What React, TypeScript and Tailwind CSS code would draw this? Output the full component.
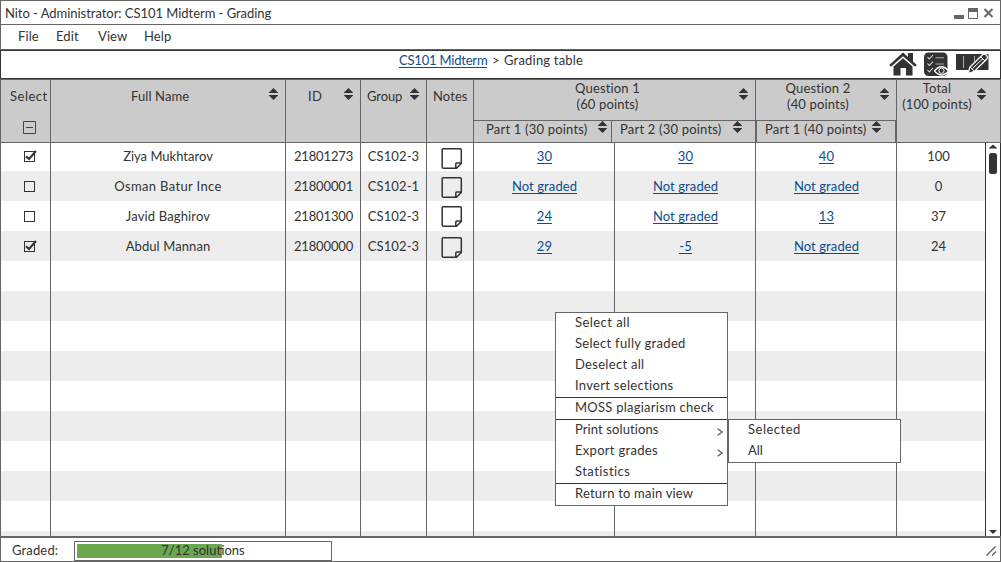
import React from "react";

const COLS = "grid grid-cols-[50px_235px_75px_66px_47px_141px_141px_141px_88px]";

function Sort({ className = "" }: { className?: string }) {
  return (
    <svg width="9" height="12" viewBox="0 0 9 12" className={"shrink-0 " + className}>
      <path d="M4.5 0 L9 4.4 V5 H0 V4.4 Z M0 7 H9 V7.6 L4.5 12 L0 7.6 Z" fill="#333" />
    </svg>
  );
}

function Check({ on }: { on: boolean }) {
  return (
    <svg width="14" height="12" viewBox="0 0 14 12" className="block">
      <rect x="0.5" y="1.5" width="10" height="10" fill="none" stroke="#333" />
      {on && <path d="M2 6.2 L5 9 L12 1" fill="none" stroke="#333" strokeWidth="2" />}
    </svg>
  );
}

function Note() {
  return (
    <svg width="22" height="22" viewBox="0 0 22 22" className="block">
      <path d="M2 0.8 H19 Q20.3 0.8 20.3 2 V15.5 L15.5 20.3 H2.5 Q1.2 20.3 1.2 19 V1.6 Q1.2 0.8 2 0.8 Z M14.8 20 V16 Q14.8 15 15.8 15 H20" fill="none" stroke="#333" strokeWidth="1.5" />
    </svg>
  );
}

function HomeIcon() {
  return (
    <svg width="28" height="24" viewBox="0 0 28 24">
      <path d="M0.3 13 L14 0.5 L19 5 V1 H24 V9.6 L27.8 13 L26 14.7 L14 4.3 L2 14.7 Z" fill="#333" />
      <path d="M4.5 14.5 L14 6.2 L23.5 14.5 V23.5 H17 V16 H11.5 V23.5 H4.5 Z" fill="#333" />
    </svg>
  );
}

function ReviewIcon() {
  return (
    <svg width="25" height="25" viewBox="0 0 25 25">
      <rect x="0" y="0.5" width="23.5" height="23.5" rx="4.5" fill="#333" />
      <g fill="none" stroke="#ddd" strokeWidth="1.1">
        <path d="M3.5 5 L5.3 7 L9 3 M3.5 11.5 L5.3 13.5 L9 9.5 M3.5 18 L5.3 20 L9 16" />
        <path d="M11.5 5.7 H20 M11.5 12 H20" stroke="#aaa" />
      </g>
      <path d="M10.5 19 Q17.5 10.5 24.5 19 Q17.5 27 10.5 19 Z" fill="#333" stroke="#fff" strokeWidth="1.3" />
      <circle cx="17.5" cy="18.8" r="2.6" fill="#333" stroke="#fff" />
    </svg>
  );
}

function EditIcon() {
  return (
    <svg width="34" height="21" viewBox="0 0 34 21">
      <path d="M0 1 H32.5 V17 H0 Z" fill="#333" />
      <path d="M7.5 3 V15 M18.5 3 V10" stroke="#aaa" />
      <path d="M12 20.7 L14 14 L26.5 1.8 Q28.5 0.4 30.5 2.2 Q32 4 30.8 6 L18.5 18.3 Z" fill="#333" stroke="#fff" strokeWidth="1.3" />
      <path d="M14 14 L18.5 18.3 M24.5 3.8 L29 8 M16.5 15.5 L27 5.5" stroke="#fff" fill="none" />
    </svg>
  );
}

function Link({ children }: { children: React.ReactNode }) {
  return <span className="block h-[15px] border-b border-[#0d4b8f] leading-[14px] tracking-[0.1px] text-[#0d4b8f]">{children}</span>;
}

type Student = { name: string; id: string; group: string; grades: string[]; total: string; on: boolean };

const students: Student[] = [
  { name: "Ziya Mukhtarov", id: "21801273", group: "CS102-3", grades: ["30", "30", "40"], total: "100", on: true },
  { name: "Osman Batur Ince", id: "21800001", group: "CS102-1", grades: ["Not graded", "Not graded", "Not graded"], total: "0", on: false },
  { name: "Javid Baghirov", id: "21801300", group: "CS102-3", grades: ["24", "Not graded", "13"], total: "37", on: false },
  { name: "Abdul Mannan", id: "21800000", group: "CS102-3", grades: ["29", "-5", "Not graded"], total: "24", on: true },
];

const nameTracking = ["tracking-[0px]", "tracking-[0.35px]", "tracking-[0.15px]", "tracking-[0.1px]"];
const noteOffset = ["-mt-[1px]", "-mt-[2px]", "-mt-[3px]", "-mt-[2px]"];

const cell = "flex items-start justify-center border-r border-[#666] whitespace-nowrap";

function Row({ index }: { index: number }) {
  const s = students[index];
  const pad = index === 0 ? " h-7 pt-[6px]" : " h-[30px] pt-2";
  const c = cell + pad;
  return (
    <div className={COLS + " shrink-0 " + (index % 2 ? "bg-[#ededed]" : "bg-white")}>
      <div className={c + " justify-start! pl-[23px]"}>{s && <div className="pt-[1px]"><Check on={s.on} /></div>}</div>
      <div className={c}>{s && <span className={"leading-[14px] " + nameTracking[index]}>{s.name}</span>}</div>
      <div className={c + " pl-[1px]"}>{s && <span className="leading-[14px] tracking-[-0.15px]">{s.id}</span>}</div>
      <div className={c}>{s && <span className="leading-[14px] tracking-[0.1px]">{s.group}</span>}</div>
      <div className={c + " pl-[3px]"}>{s && <div className={noteOffset[index]}><Note /></div>}</div>
      {[0, 1, 2].map((i) => (
        <div key={i} className={c + " pl-[1px]"}>{s && <Link>{s.grades[i]}</Link>}</div>
      ))}
      <div className={"flex items-start justify-center pr-[5px]" + pad}>{s && <span className="leading-[14px] tracking-[0px]">{s.total}</span>}</div>
    </div>
  );
}

function Item({ text, sub = false, tracking = "" }: { text: string; sub?: boolean; tracking?: string }) {
  return (
    <div className="flex h-[21px] justify-between pr-1 pl-[19px] whitespace-nowrap">
      <span className={"pt-[2px] leading-[14px] " + tracking}>{text}</span>
      {sub && (
        <svg width="6" height="8" viewBox="0 0 6 8" className="mt-2">
          <path d="M0.7 0.8 L5 4 L0.7 7.2" fill="none" stroke="#666" strokeWidth="1.4" />
        </svg>
      )}
    </div>
  );
}

export default function App() {
  return (
    <div className="relative flex h-[562px] w-[1001px] flex-col overflow-hidden bg-white font-['Lato','Liberation_Sans',sans-serif] text-[13px] tracking-[0.3px] text-[#333]">
      <div className="flex h-[25px] shrink-0 items-center justify-between border border-[#666] pr-[6px] pl-1">
        <span className="pt-[2px] tracking-[-0.04px]">Nito - Administrator: CS101 Midterm - Grading</span>
        <svg width="40" height="12" viewBox="0 0 40 12">
          <path d="M0 8 H10 V12 H0 Z" fill="#666" />
          <path d="M14.5 1.5 H23.5 V11.5 H14.5 Z" fill="white" stroke="#666" />
          <path d="M14 1 H24 V5 H14 Z" fill="#666" />
          <path d="M30.5 2 L38.5 10 M38.5 2 L30.5 10" stroke="#666" strokeWidth="2" />
        </svg>
      </div>
      <div className="flex h-[25px] shrink-0 items-center border-x border-b border-[#666] pl-[17px] tracking-[0.1px]">
        <span className="w-[38px]">File</span>
        <span className="w-[42px]">Edit</span>
        <span className="w-[46px]">View</span>
        <span>Help</span>
      </div>
      <div className="flex h-[29px] shrink-0 justify-between border border-[#333]">
        <div className="flex pt-[2px] pl-[398px] leading-[14px]">
          <div className="h-[15px] w-[88px] border-b border-[#0d4b8f] tracking-[-0.2px] whitespace-nowrap text-[#0d4b8f]">CS101 Midterm</div>
          <span className="w-[17px] pl-[5px]">&gt;</span>
          <span className="tracking-[0.2px]">Grading table</span>
        </div>
        <div className="flex pt-[1px] pr-[10px]">
          <HomeIcon />
          <div className="ml-[7px]"><ReviewIcon /></div>
          <div className="mt-[1px] ml-[7px]"><EditIcon /></div>
        </div>
      </div>

      <div className={COLS + " h-16 shrink-0 border border-r-0 border-[#666] bg-[#cbcbcb] leading-[14px] whitespace-nowrap"}>
        <div className="border-r border-[#666] pt-[9px] pl-[9px]">
          <span className="tracking-[0.5px]">Select</span>
          <svg width="13" height="13" viewBox="0 0 13 13" className="mt-[18px] ml-[13px]">
            <path d="M0.5 0.5 H12.5 V12.5 H0.5 Z M3 6.5 H10" fill="none" stroke="#444" />
          </svg>
        </div>
        <div className="flex border-r border-[#666] pt-[9px] pl-[80px] tracking-[0.1px]">Full Name<Sort className="-mt-[1px] ml-auto mr-[7px]" /></div>
        <div className="flex border-r border-[#666] pt-[9px] pl-[22px]">ID<Sort className="-mt-[1px] ml-auto mr-[7px]" /></div>
        <div className="flex border-r border-[#666] pt-[9px] pl-[6px] tracking-[-0.1px]">Group<Sort className="-mt-[1px] ml-auto mr-[7px]" /></div>
        <div className="border-r border-[#666] pt-[9px] pl-[6px] tracking-[0.1px]">Notes</div>
        <div className="col-span-2 flex h-[64px] flex-col border-r border-b border-[#666]">
          <div className="flex h-10 justify-center pl-3">
            <div className="w-[243px] text-center leading-4 tracking-[0.15px]">Question 1<br />(60 points)</div>
            <Sort className="mt-2 ml-auto mr-[7px]" />
          </div>
          <div className="flex grow border-t border-[#666] tracking-[0.2px]">
            <div className="flex w-[138px] border-r border-[#666] pt-[1px] pl-3">Part 1 (30 points)<Sort className="-mt-[1px] ml-auto mr-1" /></div>
            <div className="flex w-[134px] pt-[1px] pl-[8px]">Part 2 (30 points)<Sort className="-mt-[1px] ml-auto mr-1" /></div>
          </div>
        </div>
        <div className="flex h-[64px] flex-col border-r border-b border-[#666]">
          <div className="flex h-10 justify-between">
            <div className="w-[124px] text-center leading-4 tracking-[0.15px]">Question 2<br />(40 points)</div>
            <Sort className="mt-2 mr-[7px]" />
          </div>
          <div className="flex grow border-x border-t border-[#666] pt-[1px] pl-[8px] tracking-[0.2px]">Part 1 (40 points)<Sort className="-mt-[1px] ml-auto mr-[14px]" /></div>
        </div>
        <div className="flex w-[104px] border-r border-[#666]">
          <div className="w-[80px] text-center leading-4 tracking-[0.15px]">Total<br />(100 points)</div>
          <Sort className="mt-2" />
        </div>
      </div>

      <div className="flex h-[393px] shrink-0 border-l border-[#666]">
        <div className="flex flex-col overflow-hidden">
          {Array.from({ length: 14 }, (_, i) => <Row key={i} index={i} />)}
        </div>
        <div className="flex w-4 shrink-0 flex-col items-center justify-between border-x border-[#333] pt-[1px] pb-[2px]">
          <svg width="8" height="30" viewBox="0 0 8 30">
            <path d="M0 4.5 V4 L4 0.5 L8 4 V4.5 Z" fill="#333" />
            <rect x="0" y="9" width="8" height="21" rx="2.5" fill="#333" />
          </svg>
          <svg width="8" height="4" viewBox="0 0 8 4"><path d="M0 0 H8 L4 4 Z" fill="#333" /></svg>
        </div>
      </div>
      <div className="flex h-[26px] shrink-0 border-x border-t-2 border-b border-[#666]">
        <span className="w-[73px] pt-[5px] pl-[11px] leading-[14px] tracking-[0.15px]">Graded:</span>
        <div className="mt-[3px] flex h-5 w-[258px] border border-[#666] p-[2px] pb-[2px]">
          <div className="relative flex h-[14px] w-full justify-center">
            <div className="absolute top-0 left-0 h-[14px] w-[145px] bg-[#6aa84f]" />
            <span className="relative leading-[13px] tracking-[0px]">7/12 solutions</span>
          </div>
        </div>
        <svg width="11" height="10" viewBox="0 0 11 10" className="mt-[8px] mr-[3px] ml-auto">
          <path d="M0.5 9.5 L9.5 0.5 M6 9.5 L10 5.5" stroke="#555" fill="none" strokeWidth="1.2" />
        </svg>
      </div>

      <div className="absolute top-[312px] left-[555px] flex w-[173px] flex-col border border-[#666] bg-white">
        <Item text="Select all" tracking="tracking-[0.45px]" />
        <Item text="Select fully graded" />
        <Item text="Deselect all" />
        <Item text="Invert selections" />
        <div className="border-y border-[#333]"><Item text="MOSS plagiarism check" tracking="tracking-[0.25px]" /></div>
        <Item text="Print solutions" sub tracking="tracking-[0.1px]" />
        <Item text="Export grades" sub />
        <Item text="Statistics" tracking="tracking-[0.45px]" />
        <div className="border-t border-[#333]"><Item text="Return to main view" tracking="tracking-[0.2px]" /></div>
      </div>
      <div className="absolute top-[419px] left-[728px] w-[173px] border border-[#666] bg-white">
        <Item text="Selected" tracking="tracking-[0.5px]" />
        <Item text="All" tracking="tracking-[0px]" />
      </div>
    </div>
  );
}
